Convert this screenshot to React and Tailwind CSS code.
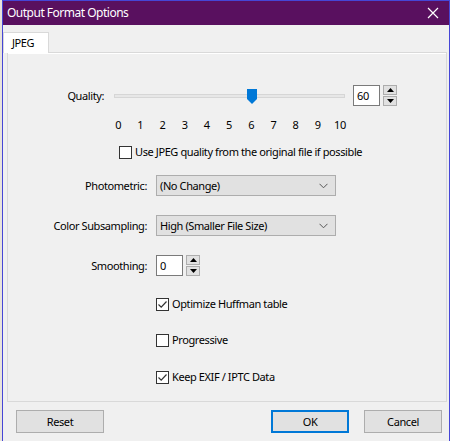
import React from "react";

const font = { fontFamily: '"Noto Sans", "Open Sans", Arial, sans-serif' };

function Check({ checked }) {
  return (
    <div className="w-[13px] h-[13px] border border-[#333333] bg-white flex items-center justify-center shrink-0">
      {checked && (
        <svg width="11" height="11" viewBox="0 0 11 11">
          <path d="M1.5 5.5 L4.2 8.2 L9.5 2.5" fill="none" stroke="#333333" strokeWidth="1.2" />
        </svg>
      )}
    </div>
  );
}

function Spin() {
  return (
    <div className="flex flex-col gap-[1px] w-[14px]">
      <div className="h-[10px] border border-[#adadad] bg-[#e1e1e1] flex items-center justify-center">
        <svg width="7" height="4" viewBox="0 0 7 4"><path d="M0 4 L3.5 0 L7 4 Z" fill="#000" /></svg>
      </div>
      <div className="h-[10px] border border-[#adadad] bg-[#e1e1e1] flex items-center justify-center">
        <svg width="7" height="4" viewBox="0 0 7 4"><path d="M0 0 L3.5 4 L7 0 Z" fill="#000" /></svg>
      </div>
    </div>
  );
}

function Select({ value }) {
  return (
    <div className="w-[180px] h-[21px] border border-[#adadad] bg-[#e1e1e1] flex items-center justify-between pl-[3px] pr-[7px]">
      <span>{value}</span>
      <svg width="9" height="6" viewBox="0 0 9 6"><path d="M0.5 0.8 L4.5 4.8 L8.5 0.8" fill="none" stroke="#555" strokeWidth="1" /></svg>
    </div>
  );
}

function CheckRow({ checked, label, mt }) {
  return (
    <div className={`flex items-center h-[16px] pl-[148px] ${mt}`}>
      <Check checked={checked} />
      <span className="ml-[3px]">{label}</span>
    </div>
  );
}

export default function App() {
  const ticks = ["0", "1", "2", "3", "4", "5", "6", "7", "8", "9", "10"];
  return (
    <div className="w-[450px] h-[441px] flex bg-[#dcdce8] text-[11px] tracking-[-0.4px] text-black leading-[16px]" style={font}>
      <div className="w-[2px] h-full bg-[#e8e4dc]" />
      <div className="w-[448px] h-full border-t border-l border-r border-[#4646d6] flex flex-col bg-[#f0f0f0]">
        <div className="h-[24px] bg-[#59105f] flex items-center justify-between pl-[4px] pr-[10px] text-white text-[12px] tracking-[-0.5px]">
          <span>Output Format Options</span>
          <svg width="12" height="12" viewBox="0 0 12 12"><path d="M1 1 L11 11 M11 1 L1 11" stroke="#fff" strokeWidth="1.2" /></svg>
        </div>
        <div className="flex flex-col pt-[7px] bg-[#f0f0f0]">
          <div className="flex items-end h-[21px] pl-0">
            <div className="h-[21px] w-[46px] bg-white border border-b-0 border-[#d9d9d9] pl-[8px] pt-[2px] relative z-10">JPEG</div>
          </div>
          <div className="ml-[4px] w-[440px] h-[350px] border border-[#d9d9d9] -mt-[1px] bg-[#f0f0f0] flex flex-col">
            <div className="h-[1px] bg-white" />
            <div className="flex items-center h-[21px] mt-[31px]">
              <div className="w-[96px] text-right">Quality:</div>
              <div className="ml-[10px] w-[231px] h-[15px] relative flex items-center">
                <div className="w-full h-[4px] bg-[#e7e7e7] border border-[#d6d6d6]" />
                <svg className="absolute left-[133px] top-[1px]" width="10" height="15" viewBox="0 0 10 15">
                  <path d="M0 0 H10 V10 L5 15 L0 10 Z" fill="#0078d7" />
                </svg>
              </div>
              <div className="ml-[8px] w-[27px] h-[21px] border border-[#7a7a7a] bg-white pl-[3px] flex items-center">60</div>
              <div className="ml-[3px]"><Spin /></div>
            </div>
            <div className="grid grid-cols-11 w-[244px] ml-[99px] mt-[11px] h-[16px]">
              {ticks.map((t) => (
                <span key={t} className="text-center">{t}</span>
              ))}
            </div>
            <div className="flex items-center h-[16px] mt-[11px] pl-[111px]">
              <Check checked={false} />
              <span className="ml-[3px]">Use JPEG quality from the original file if possible</span>
            </div>
            <div className="flex items-center h-[21px] mt-[15px]">
              <div className="w-[139px] text-right">Photometric:</div>
              <div className="ml-[9px]"><Select value="(No Change)" /></div>
            </div>
            <div className="flex items-center h-[21px] mt-[19px]">
              <div className="w-[139px] text-right">Color Subsampling:</div>
              <div className="ml-[9px]"><Select value="High (Smaller File Size)" /></div>
            </div>
            <div className="flex items-center h-[21px] mt-[19px]">
              <div className="w-[139px] text-right">Smoothing:</div>
              <div className="ml-[9px] w-[27px] h-[21px] border border-[#7a7a7a] bg-white pl-[3px] flex items-center">0</div>
              <div className="ml-[3px]"><Spin /></div>
            </div>
            <CheckRow checked={true} label="Optimize Huffman table" mt="mt-[20px]" />
            <CheckRow checked={false} label="Progressive" mt="mt-[20px]" />
            <CheckRow checked={true} label="Keep EXIF / IPTC Data" mt="mt-[21px]" />
          </div>
          <div className="flex items-center h-[23px] mt-[8px] pl-[13px]">
            <div className="w-[88px] h-[23px] border border-[#adadad] bg-[#e1e1e1] flex items-center justify-center">Reset</div>
            <div className="ml-[167px] w-[78px] h-[23px] border-2 border-[#0078d7] bg-[#e1e1e1] flex items-center justify-center">OK</div>
            <div className="ml-[15px] w-[78px] h-[23px] border border-[#adadad] bg-[#e1e1e1] flex items-center justify-center">Cancel</div>
          </div>
        </div>
      </div>
    </div>
  );
}
